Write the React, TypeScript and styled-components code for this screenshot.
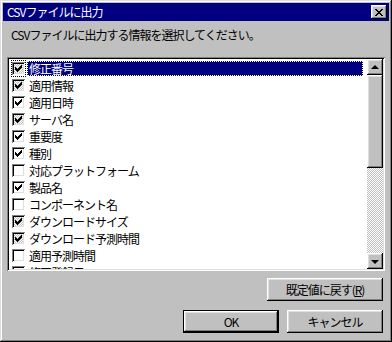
import React from 'react';
import styled, { createGlobalStyle, css } from 'styled-components';

const GlobalStyle = createGlobalStyle`
  html, body {
    margin: 0;
    padding: 0;
    background: #c0c0c0;
  }
  body {
    font-family: "Noto Sans CJK JP", "Liberation Sans", sans-serif;
    font-size: 12px;
    letter-spacing: -1px;
    color: #000;
  }
  svg {
    display: block;
  }
`;

const raised = css`
  box-shadow: inset -1px -1px #000, inset 1px 1px #fff, inset -2px -2px #808080,
    inset 2px 2px #dfdfdf;
`;

const dither = css`
  background: repeating-conic-gradient(#c0c0c0 0% 25%, #fff 0% 50%) 0 0 / 2px 2px;
`;

const Window = styled.div`
  width: 392px;
  height: 342px;
  box-sizing: border-box;
  padding: 3px;
  background: #c0c0c0;
  box-shadow: inset -1px -1px #000, inset 1px 1px #dfdfdf, inset -2px -2px #808080,
    inset 2px 2px #fff;
  display: flex;
  flex-direction: column;
`;

const TitleBar = styled.div`
  height: 18px;
  background: #000080;
  color: #fff;
  display: flex;
  align-items: center;
  justify-content: space-between;
  padding: 0 2px;
`;

const TitleText = styled.span`
  line-height: 14px;
  padding-left: 2px;
`;

const CloseButton = styled.div`
  width: 16px;
  height: 14px;
  background: #c0c0c0;
  ${raised};
  display: flex;
  align-items: center;
  justify-content: center;
`;

const Content = styled.div`
  flex: 1;
  display: flex;
  flex-direction: column;
  padding: 0 4px;
`;

const Prompt = styled.div`
  line-height: 14px;
  padding-left: 4px;
  margin: 7px 0 15px;
`;

const ListBox = styled.div`
  height: 214px;
  box-sizing: border-box;
  padding: 2px;
  display: flex;
  box-shadow: inset 1px 1px #808080, inset -1px -1px #fff, inset 2px 2px #000,
    inset -2px -2px #dfdfdf;
`;

const Items = styled.div`
  flex: 1;
  background: #fff;
  overflow: hidden;
  padding-top: 1px;
`;

const Row = styled.div`
  height: 17px;
  display: flex;
  align-items: center;
  padding-left: 2px;
  padding-right: 4px;
`;

const BoxCell = styled.div<{ $focus?: boolean }>`
  height: 17px;
  width: 15px;
  flex: none;
  display: flex;
  align-items: center;
  justify-content: center;
  box-sizing: border-box;
  ${(p) => p.$focus && css`
    outline: 1px dotted #000;
    outline-offset: -1px;
  `}
`;

const Check = styled.div<{ $gray?: boolean }>`
  width: 13px;
  height: 13px;
  flex: none;
  box-sizing: border-box;
  padding: 3px;
  display: flex;
  background: #fff;
  ${(p) => p.$gray && dither};
  box-shadow: inset 1px 1px #808080, inset -1px -1px #fff, inset 2px 2px #000,
    inset -2px -2px #dfdfdf;
`;

const Label = styled.div<{ $selected?: boolean }>`
  flex: 1;
  height: 15px;
  line-height: 15px;
  padding: 0 2px;
  margin-left: 1px;
  white-space: nowrap;
  ${(p) => p.$selected && css`
    background: #000080;
    color: #fff;
    outline: 1px dotted #ffffc0;
    outline-offset: -1px;
  `}
`;

const ScrollBar = styled.div`
  width: 16px;
  display: flex;
  flex-direction: column;
`;

const ArrowButton = styled.div`
  width: 16px;
  height: 16px;
  background: #c0c0c0;
  ${raised};
  display: flex;
  align-items: center;
  justify-content: center;
`;

const Arrow = styled.div<{ $down?: boolean }>`
  width: 0;
  height: 0;
  border-left: 4px solid transparent;
  border-right: 4px solid transparent;
  ${(p) =>
    p.$down
      ? css`border-top: 4px solid #000; margin-top: 1px;`
      : css`border-bottom: 4px solid #000; margin-top: -1px;`}
`;

const Track = styled.div`
  flex: 1;
  ${dither};
`;

const Thumb = styled.div`
  height: 93px;
  background: #c0c0c0;
  ${raised};
`;

const ResetRow = styled.div`
  display: flex;
  justify-content: flex-end;
  padding-right: 2px;
  margin-top: 7px;
`;

const ButtonRow = styled.div`
  display: flex;
  justify-content: flex-end;
  gap: 8px;
  padding-right: 2px;
  margin-top: 9px;
`;

const Button = styled.div<{ $width: number; $default?: boolean }>`
  width: ${(p) => p.$width}px;
  height: 23px;
  box-sizing: border-box;
  background: #c0c0c0;
  display: flex;
  align-items: center;
  justify-content: center;
  line-height: 14px;
  ${(p) =>
    p.$default
      ? css`
          box-shadow: inset 0 0 0 1px #000, inset -2px -2px #000, inset 2px 2px #fff,
            inset -3px -3px #808080, inset 3px 3px #dfdfdf;
        `
      : raised};
`;

const CheckMark = () => (
  <svg width="7" height="7" viewBox="0 0 7 7" shapeRendering="crispEdges">
    <path d="M6 0h1v1H6zM5 1h2v1H5zM0 2h1v1H0zM4 2h3v1H4zM0 3h2v1H0zM3 3h3v1H3zM0 4h5v1H0zM1 5h3v1H1zM2 6h1v1H2z" fill="#000" />
  </svg>
);

const CloseGlyph = () => (
  <svg width="8" height="7" viewBox="0 0 8 7" shapeRendering="crispEdges">
    <path d="M0 0h2v1H0zM6 0h2v1H6zM1 1h2v1H1zM5 1h2v1H5zM2 2h4v1H2zM3 3h2v1H3zM2 4h4v1H2zM1 5h2v1H1zM5 5h2v1H5zM0 6h2v1H0zM6 6h2v1H6z" fill="#000" />
  </svg>
);

type State = 'on' | 'gray' | 'off';

const items: { label: string; state: State }[] = [
  { label: '修正番号', state: 'gray' },
  { label: '適用情報', state: 'gray' },
  { label: '適用日時', state: 'on' },
  { label: 'サーバ名', state: 'gray' },
  { label: '重要度', state: 'on' },
  { label: '種別', state: 'on' },
  { label: '対応プラットフォーム', state: 'off' },
  { label: '製品名', state: 'on' },
  { label: 'コンポーネント名', state: 'off' },
  { label: 'ダウンロードサイズ', state: 'gray' },
  { label: 'ダウンロード予測時間', state: 'gray' },
  { label: '適用予測時間', state: 'off' },
  { label: '修正登録日', state: 'off' },
];

export default function App() {
  return (
    <>
      <GlobalStyle />
      <Window>
        <TitleBar>
          <TitleText>CSVファイルに出力</TitleText>
          <CloseButton>
            <CloseGlyph />
          </CloseButton>
        </TitleBar>
        <Content>
          <Prompt>CSVファイルに出力する情報を選択してください。</Prompt>
          <ListBox>
            <Items>
              {items.map((item, i) => (
                <Row key={item.label}>
                  <BoxCell $focus={i === 0}>
                    <Check $gray={item.state === 'gray'}>
                      {item.state !== 'off' && <CheckMark />}
                    </Check>
                  </BoxCell>
                  <Label $selected={i === 0}>{item.label}</Label>
                </Row>
              ))}
            </Items>
            <ScrollBar>
              <ArrowButton>
                <Arrow />
              </ArrowButton>
              <Track>
                <Thumb />
              </Track>
              <ArrowButton>
                <Arrow $down />
              </ArrowButton>
            </ScrollBar>
          </ListBox>
          <ResetRow>
            <Button $width={116}>
              既定値に戻す(<u>R</u>)
            </Button>
          </ResetRow>
          <ButtonRow>
            <Button $width={96} $default>
              OK
            </Button>
            <Button $width={96}>キャンセル</Button>
          </ButtonRow>
        </Content>
      </Window>
    </>
  );
}
